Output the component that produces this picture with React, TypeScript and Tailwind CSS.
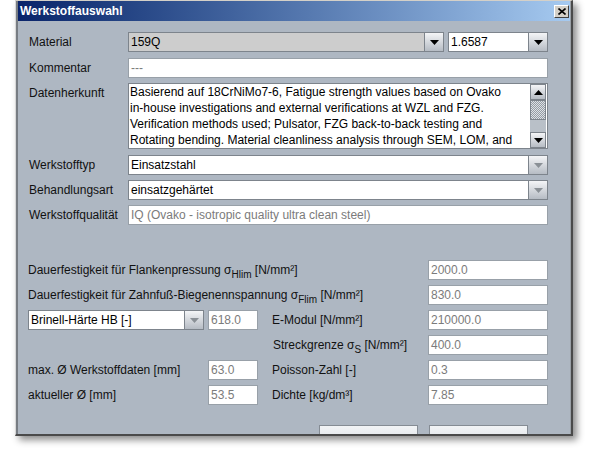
import React from 'react';

const labelCls = 'text-[12px] text-[#111] whitespace-nowrap';

function ArrowButton({ disabled }: { disabled?: boolean }) {
    return (
        <div className="w-[19px] shrink-0 flex items-center justify-center border-l border-[#7d848c] bg-gradient-to-b from-[#f4f5f7] to-[#b6bcc4]">
            <svg width="9" height="5" viewBox="0 0 9 5">
                <path d="M0 0h9L4.5 5z" fill={disabled ? '#8a9096' : '#000'} />
            </svg>
        </div>
    );
}

function Combo({ value, gray, disabled, className = '' }: { value: string; gray?: boolean; disabled?: boolean; className?: string }) {
    return (
        <div className={`flex h-[20px] border border-[#7d848c] ${className}`}>
            <div className={`flex-1 min-w-0 flex items-center px-[2px] text-[12px] text-black whitespace-nowrap overflow-hidden ${gray ? 'bg-[#cdcdcd]' : 'bg-white'}`}>
                {value}
            </div>
            <ArrowButton disabled={disabled} />
        </div>
    );
}

function Field({ value, muted, className = '' }: { value: string; muted?: boolean; className?: string }) {
    return (
        <div className={`h-[20px] flex items-center px-[2px] bg-white border text-[12px] whitespace-nowrap overflow-hidden ${muted ? 'border-[#98a0a8] text-[#7b7b7b]' : 'border-[#7d848c] text-black'} ${className}`}>
            {value}
        </div>
    );
}

function Sub({ children }: { children: React.ReactNode }) {
    return <span className="text-[10px] relative top-[4px]">{children}</span>;
}

function ScrollArrow({ up }: { up?: boolean }) {
    return (
        <div className="h-[16px] flex items-center justify-center border border-[#7d848c] bg-gradient-to-b from-[#f4f5f7] to-[#b6bcc4]">
            <svg width="9" height="5" viewBox="0 0 9 5">
                <path d={up ? 'M0 5h9L4.5 0z' : 'M0 0h9L4.5 5z'} fill="#000" />
            </svg>
        </div>
    );
}

const herkunft = [
    'Basierend auf 18CrNiMo7-6, Fatigue strength values based on Ovako',
    'in-house investigations and external verifications at WZL and FZG.',
    'Verification methods used; Pulsator, FZG back-to-back testing and',
    'Rotating bending. Material cleanliness analysis through SEM, LOM, and',
];

export default function App() {
    return (
        <div className="w-[590px] h-[451px] bg-white overflow-hidden font-['Liberation_Sans',Arial,sans-serif]">
            <div className="ml-[15px] w-[558px] h-[436px] flex flex-col border-t border-t-[#d4d0c8] border-l border-l-[#d8d8d8] border-r-[2px] border-r-[#4a4a4a] border-b-[2px] border-b-[#4a4a4a] shadow-[4px_4px_7px_rgba(0,0,0,0.45)]">
                <div className="flex-1 flex flex-col border-l-[2px] border-l-[#777c82] border-r border-r-[#9aa0a6] min-h-0">
                    {/* Title bar */}
                    <div className="h-[20px] shrink-0 flex items-center justify-between pl-[2px] pr-[1px] bg-gradient-to-r from-[#0a246a] to-[#a6caf0]">
                        <span className="text-[12px] font-bold text-white">Werkstoffauswahl</span>
                        <div className="w-[15px] h-[13px] flex items-center justify-center bg-[#d4d0c8] border border-t-white border-l-white border-r-[#404040] border-b-[#404040]">
                            <svg width="8" height="7" viewBox="0 0 8 7">
                                <path d="M0.5 0.5L7.5 6.5M7.5 0.5L0.5 6.5" stroke="#000" strokeWidth="1.6" />
                            </svg>
                        </div>
                    </div>

                    {/* Body */}
                    <div className="flex-1 min-h-0 overflow-hidden bg-[#aeb7c2] pl-[10px] pr-[22px] pt-[11px] flex flex-col">
                        <div className="flex items-center h-[20px]">
                            <div className={`w-[100px] pl-[1px] ${labelCls}`}>Material</div>
                            <div className="flex-1 flex gap-[4px]">
                                <Combo value="159Q" gray className="flex-1" />
                                <Combo value="1.6587" className="w-[100px]" />
                            </div>
                        </div>

                        <div className="flex items-center h-[19px] mt-[6px]">
                            <div className={`w-[100px] pl-[1px] ${labelCls}`}>Kommentar</div>
                            <Field value="---" muted className="flex-1 h-[19px]" />
                        </div>

                        <div className="flex mt-[6px] h-[68px]">
                            <div className={`w-[100px] pl-[1px] pt-[2px] leading-[16px] ${labelCls}`}>Datenherkunft</div>
                            <div className="flex-1 flex bg-white border border-[#7d848c] min-w-0">
                                <div className="flex-1 min-w-0 overflow-hidden pl-[1px] text-[12px] leading-[16px] text-black">
                                    {herkunft.map(line => (
                                        <div key={line} className="whitespace-nowrap">{line}</div>
                                    ))}
                                </div>
                                <div className="w-[16px] shrink-0 flex flex-col bg-[#b9c0c8] mr-[1px]">
                                    <ScrollArrow up />
                                    <div className="h-[20px] border border-[#7d848c] bg-[conic-gradient(#959ca4_25%,#dde1e5_0_50%,#959ca4_0_75%,#dde1e5_0)] bg-[length:2px_2px]" />
                                    <div className="flex-1" />
                                    <ScrollArrow />
                                </div>
                            </div>
                        </div>

                        <div className="flex items-center h-[20px] mt-[6px]">
                            <div className={`w-[100px] pl-[1px] ${labelCls}`}>Werkstofftyp</div>
                            <Combo value="Einsatzstahl" disabled className="flex-1" />
                        </div>

                        <div className="flex items-center h-[20px] mt-[5px]">
                            <div className={`w-[100px] pl-[1px] ${labelCls}`}>Behandlungsart</div>
                            <Combo value="einsatzgehärtet" disabled className="flex-1" />
                        </div>

                        <div className="flex items-center h-[20px] mt-[5px]">
                            <div className={`w-[100px] pl-[1px] ${labelCls}`}>Werkstoffqualität</div>
                            <Field value="IQ (Ovako - isotropic quality ultra clean steel)" muted className="flex-1" />
                        </div>

                        {/* Strength values */}
                        <div className="flex items-center h-[20px] mt-[35px]">
                            <div className={`flex-1 ${labelCls}`}>
                                Dauerfestigkeit für Flankenpressung σ<Sub>Hlim</Sub> [N/mm²]
                            </div>
                            <Field value="2000.0" muted className="w-[120px]" />
                        </div>

                        <div className="flex items-center h-[20px] mt-[5px]">
                            <div className={`flex-1 ${labelCls}`}>
                                Dauerfestigkeit für Zahnfuß-Biegenennspannung σ<Sub>Flim</Sub> [N/mm²]
                            </div>
                            <Field value="830.0" muted className="w-[120px]" />
                        </div>

                        <div className="flex items-center h-[20px] mt-[5px]">
                            <div className="w-[230px] flex gap-[4px]">
                                <Combo value="Brinell-Härte HB [-]" disabled className="w-[176px]" />
                                <Field value="618.0" muted className="w-[50px]" />
                            </div>
                            <div className={`flex-1 pl-[14px] ${labelCls}`}>E-Modul [N/mm²]</div>
                            <Field value="210000.0" muted className="w-[120px]" />
                        </div>

                        <div className="flex items-center h-[20px] mt-[5px]">
                            <div className="w-[230px]" />
                            <div className={`flex-1 pl-[15px] ${labelCls}`}>
                                Streckgrenze σ<Sub>S</Sub> [N/mm²]
                            </div>
                            <Field value="400.0" muted className="w-[120px]" />
                        </div>

                        <div className="flex items-center h-[20px] mt-[5px]">
                            <div className="w-[230px] flex items-center">
                                <div className={`flex-1 ${labelCls}`}>max. Ø Werkstoffdaten [mm]</div>
                                <Field value="63.0" muted className="w-[50px]" />
                            </div>
                            <div className={`flex-1 pl-[14px] ${labelCls}`}>Poisson-Zahl [-]</div>
                            <Field value="0.3" muted className="w-[120px]" />
                        </div>

                        <div className="flex items-center h-[20px] mt-[5px]">
                            <div className="w-[230px] flex items-center">
                                <div className={`flex-1 ${labelCls}`}>aktueller Ø [mm]</div>
                                <Field value="53.5" muted className="w-[50px]" />
                            </div>
                            <div className={`flex-1 pl-[14px] ${labelCls}`}>Dichte [kg/dm³]</div>
                            <Field value="7.85" muted className="w-[120px]" />
                        </div>

                        {/* Buttons, cut off by the window edge */}
                        <div className="flex justify-end gap-[11px] mt-[20px] pr-[20px] shrink-0">
                            <div className="w-[99px] h-[26px] border border-[#858c94] bg-gradient-to-b from-[#f2f4f6] to-[#d6dbe0]" />
                            <div className="w-[99px] h-[26px] border border-[#858c94] bg-gradient-to-b from-[#f2f4f6] to-[#d6dbe0]" />
                        </div>
                    </div>
                </div>
            </div>
        </div>
    );
}
